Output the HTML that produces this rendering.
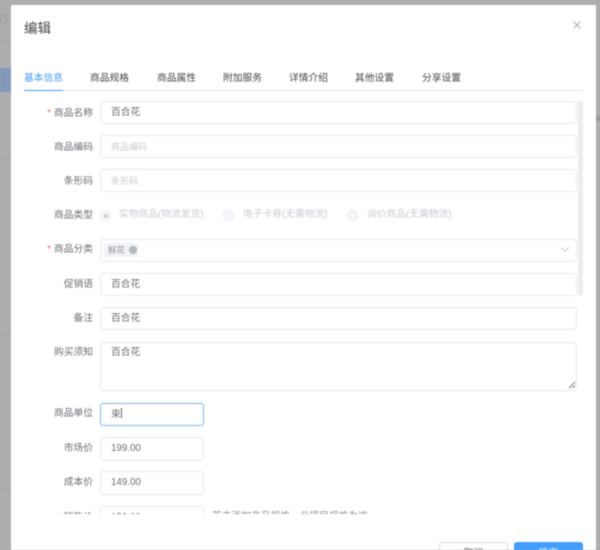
<!DOCTYPE html>
<html lang="zh">
<head>
<meta charset="utf-8">
<style>
html,body{margin:0;padding:0;width:600px;height:550px;overflow:hidden;background:#adadad}
body{font-family:"Liberation Sans","Noto Sans CJK SC",sans-serif;position:relative}
#root{position:absolute;left:0;top:0;width:600px;height:550px;overflow:hidden;filter:blur(.5px)}
.abs,.l,.i,.t,.r,.rt{position:absolute}
.modal{position:absolute;left:10.5px;top:5px;width:585.5px;height:545px;background:#fff}
.l{right:507px;margin-top:1.5px;font-size:9.75px;color:#6b6e73;line-height:14px;white-space:nowrap;text-align:right}
.l b{color:#f56c6c;font-weight:400;margin-right:3px}
.i{left:100px;width:475px;height:20.5px;border:1px solid #e8eaef;border-radius:3px;background:#fff;font-size:9.75px;color:#6b6e73;line-height:22px;text-indent:10px;white-space:nowrap}
.s{width:102px}
.ph{color:#c8ccd3;font-size:9px}
.t{top:72px;font-size:9.75px;color:#45474b;line-height:14px;white-space:nowrap}
.rt{font-size:9.75px;color:#c8ccd3;line-height:14px;top:208px;white-space:nowrap}
.r{top:210px;width:9px;height:9px;border:1px solid #eceef2;border-radius:50%;background:#f5f7fa}
</style>
</head>
<body>
<div id="root">
  <div class="abs" style="left:0;top:41px;width:11px;height:1px;background:#a6a6a6"></div>
  <div class="abs" style="left:0;top:68px;width:11px;height:24px;background:#7f9ab8"></div>
  <div class="abs" style="left:0;top:15px;width:7px;height:9px;border:1px solid #9a9a9a;border-radius:3px;box-sizing:border-box"></div>
  <div class="abs" style="left:0;top:158px;width:11px;height:1px;background:#a6a6a6"></div>
  <div class="abs" style="left:0;top:335px;width:11px;height:1px;background:#a6a6a6"></div>
  <div class="abs" style="left:0;top:488px;width:11px;height:1px;background:#a6a6a6"></div>
  <div class="abs" style="left:596px;top:42px;width:4px;height:1px;background:#a6a6a6"></div>
  <div class="abs" style="left:596px;top:116px;width:4px;height:5px;background:#999"></div>

  <div class="modal"></div>

  <div class="abs" style="left:24px;top:19.5px;font-size:13.5px;line-height:18px;color:#45474b">编辑</div>
  <svg class="abs" style="left:572px;top:20px" width="10" height="10" viewBox="0 0 10 10"><path d="M1.5 1.5L8.5 8.5M8.5 1.5L1.5 8.5" stroke="#a6a9ad" stroke-width=".9" fill="none"/></svg>

  <div class="t" style="left:24px;color:#409eff">基本信息</div>
  <div class="t" style="left:90px">商品规格</div>
  <div class="t" style="left:157px">商品属性</div>
  <div class="t" style="left:223px">附加服务</div>
  <div class="t" style="left:289px">详情介绍</div>
  <div class="t" style="left:355px">其他设置</div>
  <div class="t" style="left:422px">分享设置</div>
  <div class="abs" style="left:24px;top:90px;width:559px;height:1px;background:#e4e7ed"></div>
  <div class="abs" style="left:24px;top:89.5px;width:39px;height:1.5px;background:#409eff"></div>

  <div class="l" style="top:105px"><b>*</b>商品名称</div>
  <div class="i" style="top:101px">百合花</div>

  <div class="l" style="top:139px">商品编码</div>
  <div class="i ph" style="top:135px">商品编码</div>

  <div class="l" style="top:173px">条形码</div>
  <div class="i ph" style="top:169px">条形码</div>

  <div class="l" style="top:207px">商品类型</div>
  <div class="r" style="left:100px"></div>
  <div class="abs" style="left:103.5px;top:213.5px;width:4px;height:4px;border-radius:50%;background:#c8ccd3"></div>
  <div class="rt" style="left:119px">实物商品(物流发货)</div>
  <div class="r" style="left:223px"></div>
  <div class="rt" style="left:243px">电子卡券(无需物流)</div>
  <div class="r" style="left:347px"></div>
  <div class="rt" style="left:367px">询价商品(无需物流)</div>

  <div class="l" style="top:241.5px"><b>*</b>商品分类</div>
  <div class="i" style="top:239px"></div>
  <div class="abs" style="left:104px;top:243px;width:34px;height:14px;background:#f0f2f5;border-radius:3px"></div>
  <div class="abs" style="left:108px;top:244px;font-size:8.5px;line-height:12px;color:#909399">鲜花</div>
  <div class="abs" style="left:129px;top:246px;width:8px;height:8px;border-radius:50%;background:#b4b7bf"></div>
  <svg class="abs" style="left:560px;top:246px" width="10" height="7" viewBox="0 0 10 7"><path d="M1 1.2L5 5.2L9 1.2" stroke="#c8ccd3" stroke-width="1" fill="none"/></svg>

  <div class="l" style="top:276px">促销语</div>
  <div class="i" style="top:273px">百合花</div>

  <div class="l" style="top:310px">备注</div>
  <div class="i" style="top:307px">百合花</div>

  <div class="l" style="top:344.5px">购买须知</div>
  <div class="i" style="top:342px;height:47px;line-height:20px">百合花</div>
  <svg class="abs" style="left:568px;top:381px" width="8" height="8" viewBox="0 0 8 8"><path d="M1 7L7 1M4.5 7L7 4.5" stroke="#555" stroke-width=".8" fill="none"/></svg>

  <div class="l" style="top:405.5px">商品单位</div>
  <div class="i s" style="top:403px;border-color:#7ab8f5">束<span style="display:inline-block;width:1px;height:10px;background:#666;vertical-align:-1px"></span></div>

  <div class="l" style="top:440px">市场价</div>
  <div class="i s" style="top:437px;height:21.5px">199.00</div>

  <div class="l" style="top:474px">成本价</div>
  <div class="i s" style="top:471px;height:21.5px">149.00</div>

  <div class="l" style="top:509px"><b>*</b>销售价</div>
  <div class="i s" style="top:506px">159.00</div>
  <div class="abs" style="left:212px;top:510px;font-size:9.75px;line-height:14px;color:#909399;white-space:nowrap">若未添加商品规格，此项目规格为准</div>

  <div class="abs" style="left:12px;top:514px;width:570px;height:20px;background:#fff"></div>
  <div class="abs" style="left:577.5px;top:101px;width:5.5px;height:195px;background:#ececec;border-radius:3px"></div>

  <div class="abs" style="left:439px;top:542px;width:67px;height:24px;border:1px solid #dcdfe6;border-radius:3px;background:#fff;text-align:center;font-size:9.75px;line-height:21px;color:#6b6e73">取消</div>
  <div class="abs" style="left:514px;top:542px;width:69px;height:26px;border-radius:3px;background:#409eff;text-align:center;font-size:9.75px;line-height:23px;color:#fff">确定</div>
</div>
</body>
</html>
